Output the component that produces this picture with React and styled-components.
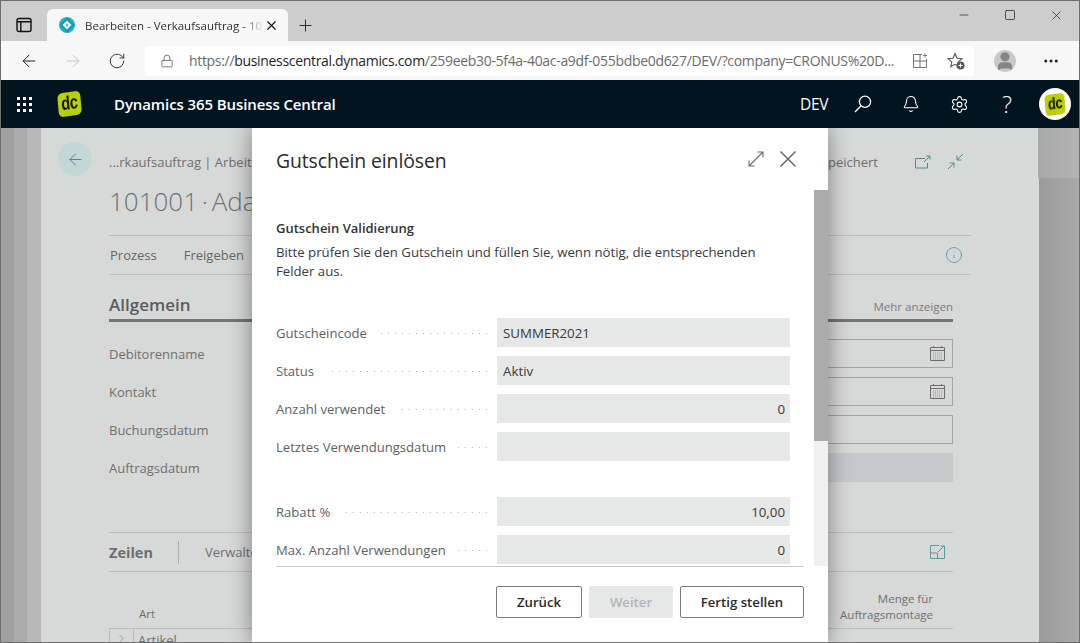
import React from "react";
import styled, { createGlobalStyle } from "styled-components";
import { ArrowLeft, ArrowRight, RotateCw, Lock, Plus, X, Minus, Square, Bell, Settings, MoreHorizontal, User, Info, ChevronRight } from "lucide-react";

const GlobalStyle = createGlobalStyle`
  html, body { margin: 0; padding: 0; background: #fff; }
  body { font-family: "Open Sans", "Noto Sans", "Liberation Sans", sans-serif; }
  * { box-sizing: border-box; }
`;

const Frame = styled.div`
  width: 1080px;
  height: 643px;
  border: 1px solid #6e6e6e;
  overflow: hidden;
  display: flex;
  flex-direction: column;
`;

const TabBar = styled.div`
  height: 40px;
  flex: none;
  background: #cdcdcd;
  display: flex;
  align-items: flex-end;
`;

const SideButton = styled.div`
  width: 46px;
  height: 32px;
  display: flex;
  justify-content: center;
  align-items: center;
`;

const Tab = styled.div`
  width: 241px;
  height: 32px;
  background: #f7f7f7;
  border-radius: 6px 6px 0 0;
  display: flex;
  align-items: center;
  padding: 0 9px 0 11px;
  font-size: 11.5px;
  color: #333;
`;

const TabTitle = styled.span`
  flex: 1;
  margin-left: 9px;
  white-space: nowrap;
  mask-image: linear-gradient(to right, #000 88%, transparent 100%);
`;

const PlusButton = styled.div`
  width: 34px;
  height: 32px;
  display: flex;
  align-items: center;
  justify-content: center;
`;

const WindowControls = styled.div`
  margin-left: auto;
  height: 40px;
  display: flex;
  align-items: flex-start;
  padding: 5px 0 0;
`;

const WindowButton = styled.div`
  width: 46px;
  height: 18px;
  display: flex;
  align-items: center;
  justify-content: center;
`;

const Toolbar = styled.div`
  height: 39px;
  flex: none;
  background: #f7f7f7;
  display: flex;
  align-items: center;
  padding-left: 6px;
`;

const NavButton = styled.div`
  width: 44px;
  height: 30px;
  display: flex;
  align-items: center;
  justify-content: center;
`;

const Omnibox = styled.div`
  width: 829px;
  height: 30px;
  margin-left: 6px;
  background: #fff;
  border-radius: 4px;
  display: flex;
  align-items: center;
  padding-left: 15px;
  font-size: 14px;
  color: #6b6b6b;
  white-space: nowrap;
`;

const Url = styled.span`
  margin-left: 15px;
  letter-spacing: -0.32px;
  b { font-weight: 400; color: #1f1f1f; }
`;

const OmniIcons = styled.div`
  margin-left: auto;
  display: flex;
  align-items: center;
  gap: 19px;
  padding-right: 9px;
`;

const Profile = styled.div`
  width: 22px;
  height: 22px;
  margin-left: 20px;
  border-radius: 50%;
  background: #c9c9c9;
  color: #858585;
  overflow: hidden;
  display: flex;
  align-items: center;
  justify-content: center;
`;

const MoreButton = styled.div`
  margin-left: 26px;
  display: flex;
`;

const NavBar = styled.div`
  height: 48px;
  flex: none;
  background: #011420;
  color: #fff;
  display: flex;
  align-items: center;
`;

const Waffle = styled.div`
  width: 46px;
  display: grid;
  grid-template-columns: repeat(3, 3px);
  gap: 3px;
  justify-content: center;
  margin-right: 11px;
`;

const WaffleDot = styled.i`
  width: 3px;
  height: 3px;
  background: #fff;
`;

const DcLogo = styled.div`
  width: ${(p) => p.$size}px;
  height: ${(p) => p.$size + 1}px;
  background: #b9cf00;
  border-radius: ${(p) => p.$size * 0.22}px;
  transform: rotate(-8deg) skewX(-3deg);
  color: #10140a;
  font-family: "Liberation Sans", sans-serif;
  font-weight: 700;
  font-size: ${(p) => p.$size * 0.82}px;
  letter-spacing: -0.5px;
  display: flex;
  align-items: center;
  justify-content: center;
  span { display: block; transform: scaleX(0.78); margin-top: -2px; }
`;

const ProductName = styled.div`
  margin-left: 33px;
  font-size: 15px;
  font-weight: 600;
  letter-spacing: -0.1px;
`;

const NavRight = styled.div`
  margin-left: auto;
  display: flex;
  align-items: center;
`;

const EnvName = styled.div`
  font-size: 15.5px;
  margin-right: 11px;
  letter-spacing: -0.4px;
`;

const NavIcon = styled.div`
  width: 48px;
  height: 48px;
  display: flex;
  align-items: center;
  justify-content: center;
  font-size: 23px;
  font-weight: 300;
`;

const AvatarCircle = styled.div`
  width: 32px;
  height: 32px;
  margin: 0 8px 0 8px;
  border-radius: 50%;
  background: #fff;
  display: flex;
  align-items: center;
  justify-content: center;
  div { filter: blur(0.5px); }
`;

const PageArea = styled.div`
  position: relative;
  flex: 1;
  min-height: 0;
  padding: 0 40px;
  overflow: hidden;
  background:
    linear-gradient(to right, #a8a8a8, #b4b4b4) right top / 41px 50px no-repeat,
    linear-gradient(to right, #9f9f9f 0 13px, #ababab 13px 26px, #b8b8b8 26px 40px, #d7d8d8 40px 1038px, #9b9b9b 1038px, #a9a9a9 100%);
`;

const Card = styled.div`
  height: 100%;
  padding: 0 68px;
  color: #6f7070;
`;

const CardTop = styled.div`
  position: relative;
  height: 45px;
  padding-top: 22px;
  font-size: 13px;
  display: flex;
  align-items: center;
  justify-content: space-between;
`;

const BackCircle = styled.div`
  position: absolute;
  left: -51px;
  top: 14px;
  width: 34px;
  height: 34px;
  border-radius: 50%;
  background: #c3d6d8;
  color: #5f6d70;
  display: flex;
  align-items: center;
  justify-content: center;
`;

const TopRight = styled.div`
  display: flex;
  align-items: center;
  color: #4a8f96;
  gap: 16px;
  padding-right: 7px;
  span { color: #6f7070; margin-right: 21px; }
`;

const PageTitle = styled.div`
  height: 63px;
  padding-top: 10px;
  font-size: 26px;
  font-weight: 300;
  word-spacing: -3px;
  color: #717272;
  border-bottom: 1px solid #bcbdbd;
`;

const ActionRow = styled.div`
  height: 39px;
  border-bottom: 1px solid #bcbdbd;
  display: flex;
  align-items: center;
  gap: 27px;
  font-size: 13px;
  color: #666;
  padding-left: 1px;
`;

const InfoIcon = styled.span`
  margin-left: auto;
  margin-right: 8px;
  color: #4a8f96;
  display: flex;
`;

const SectionHead = styled.div`
  margin-right: 18px;
  height: 47px;
  border-bottom: 3px solid #737476;
  display: flex;
  justify-content: space-between;
  align-items: flex-end;
  padding-bottom: 3px;
`;

const SectionTitle = styled.div`
  font-size: 17px;
  font-weight: 600;
  color: #5c5d5e;
`;

const MoreLink = styled.div`
  font-size: 11.5px;
  color: #7a7b7b;
  padding-bottom: 2px;
`;

const FieldList = styled.div`
  margin: 17px 18px 0 0;
  display: grid;
  grid-template-columns: 380px 1fr;
  grid-auto-rows: 29px;
  row-gap: 9px;
  font-size: 13px;
  align-items: center;
`;

const BackLabel = styled.span`
  padding-top: 1px;
`;

const BackInput = styled.div`
  height: 29px;
  border: ${(p) => (p.$filled ? "0" : "1px solid #a4a5a5")};
  background: ${(p) => (p.$filled ? "#c6c9c9" : "transparent")};
  display: flex;
  align-items: center;
  justify-content: flex-end;
  padding-right: 7px;
  color: #6d6d6d;
`;

const LinesHead = styled.div`
  margin: 50px 18px 0 0;
  height: 40px;
  border-top: 1px solid #bcbdbd;
  border-bottom: 1px solid #bcbdbd;
  display: flex;
  align-items: center;
  font-size: 13px;
`;

const LinesTitle = styled.div`
  font-size: 14.5px;
  font-weight: 700;
  color: #6d6e70;
  padding-right: 25px;
  margin-right: 26px;
  border-right: 1px solid #aeafaf;
  line-height: 23px;
`;

const LinesIcon = styled.span`
  margin-left: auto;
  margin-right: 8px;
  color: #5b9a9f;
  display: flex;
`;

const TableHead = styled.div`
  margin: 16px 18px 0 0;
  height: 41px;
  display: flex;
  justify-content: space-between;
  align-items: flex-end;
  font-size: 11.5px;
  line-height: 16px;
  padding: 0 20px 5px 30px;
  border-bottom: 1px solid #bcbdbd;
`;

const TypeHead = styled.span`
  padding-bottom: 1px;
`;

const MontageHead = styled.div`
  text-align: right;
`;

const TableRow = styled.div`
  margin-right: 18px;
  display: flex;
  height: 30px;
  font-size: 13px;
  border-left: 1px solid #bcbdbd;
`;

const RowMark = styled.div`
  width: 24px;
  border-right: 1px solid #bcbdbd;
  padding: 3px 0 0 5px;
  display: flex;
  align-items: flex-start;
`;

const RowType = styled.div`
  margin-left: 4px;
  padding-top: 2px;
`;

const Dialog = styled.div`
  position: absolute;
  left: 251px;
  top: 0;
  width: 576px;
  height: 514px;
  background: #fff;
  box-shadow: 0 0 22px rgba(0, 0, 0, 0.42);
  display: flex;
  flex-direction: column;
  color: #333;
`;

const DialogHeader = styled.div`
  height: 62px;
  flex: none;
  padding: 0 31px 0 24px;
  display: flex;
  align-items: center;
  justify-content: space-between;
`;

const DialogTitle = styled.h1`
  margin: 2px 0 0;
  font-size: 19.4px;
  font-weight: 500;
  letter-spacing: -0.1px;
  color: #2b2b2b;
`;

const HeaderIcons = styled.div`
  display: flex;
  align-items: center;
  gap: 15px;
  color: #6a6a6a;
`;

const DialogBody = styled.div`
  height: 376px;
  flex: none;
  display: flex;
`;

const BodyContent = styled.div`
  flex: 1;
  min-width: 0;
  overflow: hidden;
  padding: 29px 24px 0;
`;

const Subhead = styled.div`
  font-size: 13px;
  font-weight: 600;
  line-height: 19px;
  color: #333;
`;

const Intro = styled.p`
  margin: 5px 0 37px;
  max-width: 490px;
  font-size: 13.2px;
  line-height: 19px;
  color: #3a3a3a;
`;

const FormGroup = styled.div`
  display: flex;
  flex-direction: column;
  gap: 9px;
  margin-bottom: 36px;
`;

const FormRow = styled.div`
  display: grid;
  grid-template-columns: 221px 293px;
  align-items: center;
`;

const FormLabel = styled.div`
  display: flex;
  align-items: center;
  font-size: 13.1px;
  color: #5f6163;
  white-space: nowrap;
  padding: 1px 10px 0 0;
  &::after {
    content: "";
    flex: 1;
    height: 1px;
    margin-left: 12px;
    background: linear-gradient(to left, #adadad 1px, transparent 1px) right / 7px 1px repeat-x;
  }
`;

const FormValue = styled.div`
  height: 29px;
  background: #e6e7e7;
  font-size: 13.3px;
  color: #3a3a3a;
  padding: 1px 5px 0 6px;
  display: flex;
  align-items: center;
  justify-content: ${(p) => (p.$right ? "flex-end" : "flex-start")};
`;

const ScrollTrack = styled.div`
  width: 14px;
  flex: none;
  background: #f0f0f0;
`;

const ScrollThumb = styled.div`
  height: 251px;
  background: #ababab;
`;

const DialogFooter = styled.div`
  margin: 0 24px;
  border-top: 1px solid #c8c8c8;
  padding-top: 19px;
  display: flex;
  justify-content: flex-end;
  gap: 7px;
`;

const FooterButton = styled.button`
  width: ${(p) => p.$width}px;
  height: 32px;
  padding: 0;
  font-family: inherit;
  font-size: 13.2px;
  font-weight: 600;
  border-radius: 2px;
  border: 1px solid ${(p) => (p.disabled ? "#e6e7e7" : "#7d7d7d")};
  background: ${(p) => (p.disabled ? "#e6e7e7" : "#fff")};
  color: ${(p) => (p.disabled ? "#b2b4b6" : "#2b2b2b")};
`;

const backFields = [
  { label: "Debitorenname" },
  { label: "Kontakt" },
  { label: "Buchungsdatum" },
  { label: "Auftragsdatum" },
];

const firstGroup = [
  { label: "Gutscheincode", value: "SUMMER2021" },
  { label: "Status", value: "Aktiv" },
  { label: "Anzahl verwendet", value: "0", right: true },
  { label: "Letztes Verwendungsdatum", value: "" },
];

const secondGroup = [
  { label: "Rabatt %", value: "10,00", right: true },
  { label: "Max. Anzahl Verwendungen", value: "0", right: true },
];

const Favicon = () => (
  <svg width="18" height="18" viewBox="0 0 18 18">
    <circle cx="9" cy="9" r="8" fill="#22b8cc" />
    <path d="M1 9 9 1l8 8-8 8Z" fill="#0f7f96" opacity="0.55" />
    <path d="M9 4.500 13.500 9 9 13.500 4.500 9Z" fill="#f2fbfc" />
    <path d="M9 7.500 10.500 9 9 10.500 7.500 9Z" fill="#22b8cc" />
  </svg>
);

const SidebarIcon = () => (
  <svg width="16" height="16" viewBox="0 0 16 16" fill="none" stroke="#111" strokeWidth="1.4">
    <rect x="1" y="1.500" width="14" height="13" rx="2" />
    <path d="M1 4.800h14M4.800 4.800v9.700" />
  </svg>
);

const SplitIcon = () => (
  <svg width="16" height="16" viewBox="0 0 16 16" fill="none" stroke="#777" strokeWidth="1.1">
    <path d="M10 1.500H1.500v13h13V6M8 1.500v13M1.500 8h13M13 .5v4M11 2.500h4" />
  </svg>
);

const StarPlus = () => (
  <svg width="18" height="18" viewBox="0 0 18 18" fill="none" stroke="#555" strokeWidth="1.1">
    <path d="M8 1.500 10 6.200l5 .4-3.800 3.300 1 4.800L8 12.300 3.800 14.700l1-4.800L1 6.600l5-.4Z" />
    <circle cx="13.500" cy="13.500" r="4" fill="#555" stroke="none" />
    <path d="M13.500 11.500v4M11.500 13.500h4" stroke="#fff" />
  </svg>
);

const SearchIcon = () => (
  <svg width="18" height="18" viewBox="0 0 18 18" fill="none" stroke="#fff" strokeWidth="1.3">
    <circle cx="11" cy="6.800" r="5.600" />
    <path d="M7 10.800 1 17" />
  </svg>
);

const ExpandIcon = () => (
  <svg width="16" height="16" viewBox="0 0 16 16" fill="none" stroke="#6a6a6a" strokeWidth="1.1">
    <path d="M1 15 15 1M9.500 1H15v5.500M1 9.500V15h5.500" />
  </svg>
);

const CloseIcon = () => (
  <svg width="18" height="18" viewBox="0 0 18 18" fill="none" stroke="#6a6a6a" strokeWidth="1.5">
    <path d="M1.500 1.500 16.500 16.500M16.500 1.500 1.500 16.500" />
  </svg>
);

const OpenNewIcon = () => (
  <svg width="16" height="14" viewBox="0 0 16 14" fill="none" stroke="currentColor" strokeWidth="1">
    <path d="M10 3.500H.5v9.500h12V8M9 7l6-6M11.500 1H15v3.500" />
  </svg>
);

const CollapseIcon = () => (
  <svg width="17" height="17" viewBox="0 0 17 17" fill="none" stroke="currentColor" strokeWidth="1">
    <path d="M16 1 10 7M10 2.500V7h4.500M1 16l6-6M2.500 10H7v4.500" />
  </svg>
);

const PanelIcon = () => (
  <svg width="15" height="14" viewBox="0 0 15 14" fill="none" stroke="currentColor" strokeWidth="1">
    <path d="M9 .5H.5v13h14V5M.5 8h7v5.500M8 7l6-6M10.500 1H14.500v4" />
  </svg>
);

const CalendarIcon = () => (
  <svg width="15" height="15" viewBox="0 0 15 15" fill="none" stroke="#6d6d6d" strokeWidth="1">
    <path d="M.5 1.500h14v13H.5ZM.5 4.500h14M3.500 0v2M11.500 0v2" />
    <path d="M3 7h9M3 9h9M3 11h9M3 13h9" stroke="#9a9a9a" strokeDasharray="1 1" />
  </svg>
);

const App = () => (
  <>
    <GlobalStyle />
    <Frame>
      <TabBar>
        <SideButton>
          <SidebarIcon />
        </SideButton>
        <Tab>
          <Favicon />
          <TabTitle>Bearbeiten - Verkaufsauftrag - 10</TabTitle>
          <X size={15} color="#111" strokeWidth={1.8} />
        </Tab>
        <PlusButton>
          <Plus size={19} color="#222" strokeWidth={1.2} />
        </PlusButton>
        <WindowControls>
          <WindowButton>
            <Minus size={14} color="#222" strokeWidth={1.2} />
          </WindowButton>
          <WindowButton>
            <Square size={12} color="#222" strokeWidth={1.5} />
          </WindowButton>
          <WindowButton>
            <X size={15} color="#222" strokeWidth={1.1} />
          </WindowButton>
        </WindowControls>
      </TabBar>
      <Toolbar>
        <NavButton>
          <ArrowLeft size={20} color="#222" strokeWidth={1.2} />
        </NavButton>
        <NavButton>
          <ArrowRight size={20} color="#c4c4c4" strokeWidth={1.2} />
        </NavButton>
        <NavButton>
          <RotateCw size={18} color="#333" strokeWidth={1.3} />
        </NavButton>
        <Omnibox>
          <Lock size={14} color="#555" strokeWidth={1.3} />
          <Url>
            https://<b>businesscentral.dynamics.com</b>/259eeb30-5f4a-40ac-a9df-055bdbe0d627/DEV/?company=CRONUS%20D...
          </Url>
          <OmniIcons>
            <SplitIcon />
            <StarPlus />
          </OmniIcons>
        </Omnibox>
        <Profile>
          <User size={20} strokeWidth={3} fill="#858585" />
        </Profile>
        <MoreButton>
          <MoreHorizontal size={18} color="#222" strokeWidth={2} />
        </MoreButton>
      </Toolbar>
      <NavBar>
        <Waffle>
          {Array.from({ length: 9 }, (_, i) => (
            <WaffleDot key={i} />
          ))}
        </Waffle>
        <DcLogo $size={23}>
          <span>dc</span>
        </DcLogo>
        <ProductName>Dynamics 365 Business Central</ProductName>
        <NavRight>
          <EnvName>DEV</EnvName>
          <NavIcon>
            <SearchIcon />
          </NavIcon>
          <NavIcon>
            <Bell size={18} strokeWidth={1.4} />
          </NavIcon>
          <NavIcon>
            <Settings size={19} strokeWidth={1.4} />
          </NavIcon>
          <NavIcon>?</NavIcon>
          <AvatarCircle>
            <DcLogo $size={20}>
              <span>dc</span>
            </DcLogo>
          </AvatarCircle>
        </NavRight>
      </NavBar>
      <PageArea>
        <Card>
          <CardTop>
            <BackCircle>
              <ArrowLeft size={19} strokeWidth={1.1} />
            </BackCircle>
            <span>...rkaufsauftrag | Arbeitsda</span>
            <TopRight>
              <span>Gespeichert</span>
              <OpenNewIcon />
              <CollapseIcon />
            </TopRight>
          </CardTop>
          <PageTitle>101001 · Adatum</PageTitle>
          <ActionRow>
            <span>Prozess</span>
            <span>Freigeben</span>
            <InfoIcon>
              <Info size={18} strokeWidth={1} />
            </InfoIcon>
          </ActionRow>
          <SectionHead>
            <SectionTitle>Allgemein</SectionTitle>
            <MoreLink>Mehr anzeigen</MoreLink>
          </SectionHead>
          <FieldList>
            {backFields.map((field, index) => (
              <React.Fragment key={field.label}>
                <BackLabel>{field.label}</BackLabel>
                <BackInput $filled={index === 3}>{index < 2 && <CalendarIcon />}</BackInput>
              </React.Fragment>
            ))}
          </FieldList>
          <LinesHead>
            <LinesTitle>Zeilen</LinesTitle>
            <span>Verwalten</span>
            <LinesIcon>
              <PanelIcon />
            </LinesIcon>
          </LinesHead>
          <TableHead>
            <TypeHead>Art</TypeHead>
            <MontageHead>
              Menge für
              <br />
              Auftragsmontage
            </MontageHead>
          </TableHead>
          <TableRow>
            <RowMark>
              <ChevronRight size={13} strokeWidth={1} />
            </RowMark>
            <RowType>Artikel</RowType>
          </TableRow>
        </Card>
        <Dialog>
          <DialogHeader>
            <DialogTitle>Gutschein einlösen</DialogTitle>
            <HeaderIcons>
              <ExpandIcon />
              <CloseIcon />
            </HeaderIcons>
          </DialogHeader>
          <DialogBody>
            <BodyContent>
              <Subhead>Gutschein Validierung</Subhead>
              <Intro>
                Bitte prüfen Sie den Gutschein und füllen Sie, wenn nötig, die entsprechenden Felder aus.
              </Intro>
              <FormGroup>
                {firstGroup.map((row) => (
                  <FormRow key={row.label}>
                    <FormLabel>{row.label}</FormLabel>
                    <FormValue $right={row.right}>{row.value}</FormValue>
                  </FormRow>
                ))}
              </FormGroup>
              <FormGroup>
                {secondGroup.map((row) => (
                  <FormRow key={row.label}>
                    <FormLabel>{row.label}</FormLabel>
                    <FormValue $right={row.right}>{row.value}</FormValue>
                  </FormRow>
                ))}
              </FormGroup>
            </BodyContent>
            <ScrollTrack>
              <ScrollThumb />
            </ScrollTrack>
          </DialogBody>
          <DialogFooter>
            <FooterButton $width={86}>Zurück</FooterButton>
            <FooterButton $width={84} disabled>
              Weiter
            </FooterButton>
            <FooterButton $width={124}>Fertig stellen</FooterButton>
          </DialogFooter>
        </Dialog>
      </PageArea>
    </Frame>
  </>
);

export default App;
